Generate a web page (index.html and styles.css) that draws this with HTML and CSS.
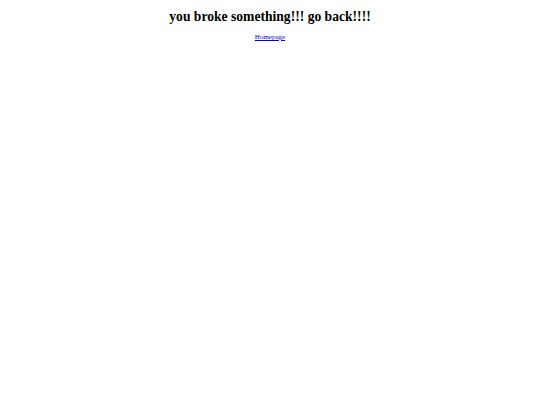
FILE: index.html
```html
<!DOCTYPE html>
<html>
<head>
<meta charset="utf-8">
<link rel="stylesheet" href="styles.css">
</head>
<body>
<div class="page">
<h1 class="title">you broke something!!! go back!!!!</h1>
<a class="home" href="#">Homepage</a>
</div>
</body>
</html>
```
FILE: styles.css
```css
html, body { margin: 0; padding: 0; background: #fff; }
.page {
  display: flex;
  flex-direction: column;
  align-items: center;
  padding-top: 9px;
  font-family: "Liberation Serif", "Times New Roman", serif;
}
.title {
  margin: 0;
  font-size: 13.6px;
  font-weight: bold;
  color: #000;
  line-height: 16px;
}
.home {
  margin-top: 8px;
  font-size: 7px;
  line-height: 8px;
  color: #0000ee;
  text-decoration: underline;
}
```
